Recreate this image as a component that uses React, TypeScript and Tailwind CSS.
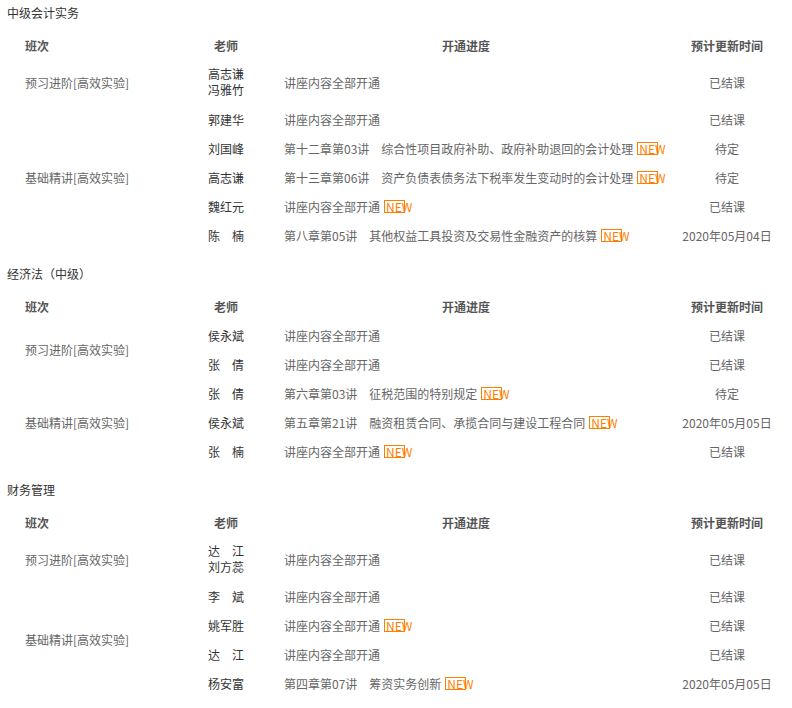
type Row = { t: string[]; p: string; n?: boolean; time: string };
type Group = { cls: string; rows: Row[] };
type Section = { title: string; groups: Group[] };

const sections: Section[] = [
  {
    title: '中级会计实务',
    groups: [
      {
        cls: '预习进阶[高效实验]',
        rows: [{ t: ['高志谦', '冯雅竹'], p: '讲座内容全部开通', time: '已结课' }],
      },
      {
        cls: '基础精讲[高效实验]',
        rows: [
          { t: ['郭建华'], p: '讲座内容全部开通', time: '已结课' },
          { t: ['刘国峰'], p: '第十二章第03讲　综合性项目政府补助、政府补助退回的会计处理', n: true, time: '待定' },
          { t: ['高志谦'], p: '第十三章第06讲　资产负债表债务法下税率发生变动时的会计处理', n: true, time: '待定' },
          { t: ['魏红元'], p: '讲座内容全部开通', n: true, time: '已结课' },
          { t: ['陈　楠'], p: '第八章第05讲　其他权益工具投资及交易性金融资产的核算', n: true, time: '2020年05月04日' },
        ],
      },
    ],
  },
  {
    title: '经济法（中级）',
    groups: [
      {
        cls: '预习进阶[高效实验]',
        rows: [
          { t: ['侯永斌'], p: '讲座内容全部开通', time: '已结课' },
          { t: ['张　倩'], p: '讲座内容全部开通', time: '已结课' },
        ],
      },
      {
        cls: '基础精讲[高效实验]',
        rows: [
          { t: ['张　倩'], p: '第六章第03讲　征税范围的特别规定', n: true, time: '待定' },
          { t: ['侯永斌'], p: '第五章第21讲　融资租赁合同、承揽合同与建设工程合同', n: true, time: '2020年05月05日' },
          { t: ['张　楠'], p: '讲座内容全部开通', n: true, time: '已结课' },
        ],
      },
    ],
  },
  {
    title: '财务管理',
    groups: [
      {
        cls: '预习进阶[高效实验]',
        rows: [{ t: ['达　江', '刘方蕊'], p: '讲座内容全部开通', time: '已结课' }],
      },
      {
        cls: '基础精讲[高效实验]',
        rows: [
          { t: ['李　斌'], p: '讲座内容全部开通', time: '已结课' },
          { t: ['姚军胜'], p: '讲座内容全部开通', n: true, time: '已结课' },
          { t: ['达　江'], p: '讲座内容全部开通', time: '已结课' },
          { t: ['杨安富'], p: '第四章第07讲　筹资实务创新', n: true, time: '2020年05月05日' },
        ],
      },
    ],
  },
];

const NewBadge = () => (
  <span className="mt-[1px] ml-[4px] inline-block h-[13px] w-[21px] border border-[#ff7e00] pl-[1px] align-top text-[12px] leading-[11px] whitespace-nowrap text-[#ff7e00]">
    NEW
  </span>
);

const SectionTable = ({ section }: { section: Section }) => (
  <div>
    <div className="pl-[7px] text-[12px] leading-[16px] text-[#333]">{section.title}</div>
    <table className="mt-[10px] w-[780px] table-fixed border-collapse text-[12px] leading-[16px]">
      <colgroup>
        <col className="w-[194px]" />
        <col className="w-[64px]" />
        <col className="w-[416px]" />
        <col className="w-[106px]" />
      </colgroup>
      <thead>
        <tr className="h-[29px] font-bold text-[#555]">
          <th className="p-0 pl-[25px] text-left font-bold">班次</th>
          <th className="p-0 text-center font-bold">老师</th>
          <th className="p-0 text-center font-bold">开通进度</th>
          <th className="p-0 text-center font-bold">预计更新时间</th>
        </tr>
      </thead>
      <tbody>
        {section.groups.map((g) =>
          g.rows.map((r, i) => (
            <tr key={g.cls + i} className="h-[29px]">
              {i === 0 && (
                <td rowSpan={g.rows.length} className="p-0 pl-[25px] align-middle text-[#666]">
                  {g.cls}
                </td>
              )}
              <td className="p-0 text-center align-middle text-[#333]">
                {r.t.length > 1 ? (
                  <div className="pt-[6px] pb-[7px]">
                    {r.t.map((name) => (
                      <div key={name}>{name}</div>
                    ))}
                  </div>
                ) : (
                  r.t[0]
                )}
              </td>
              <td className="p-0 pl-[26px] align-middle whitespace-nowrap text-[#666]">
                {r.p}
                {r.n && <NewBadge />}
              </td>
              <td className="p-0 text-center align-middle text-[#666]">{r.time}</td>
            </tr>
          ))
        )}
      </tbody>
    </table>
  </div>
);

export default function App() {
  return (
    <div className="flex min-h-[708px] w-[792px] flex-col gap-[16px] bg-white pt-[5px] font-['Noto_Sans_CJK_SC',sans-serif]">
      {sections.map((s) => (
        <SectionTable key={s.title} section={s} />
      ))}
    </div>
  );
}
